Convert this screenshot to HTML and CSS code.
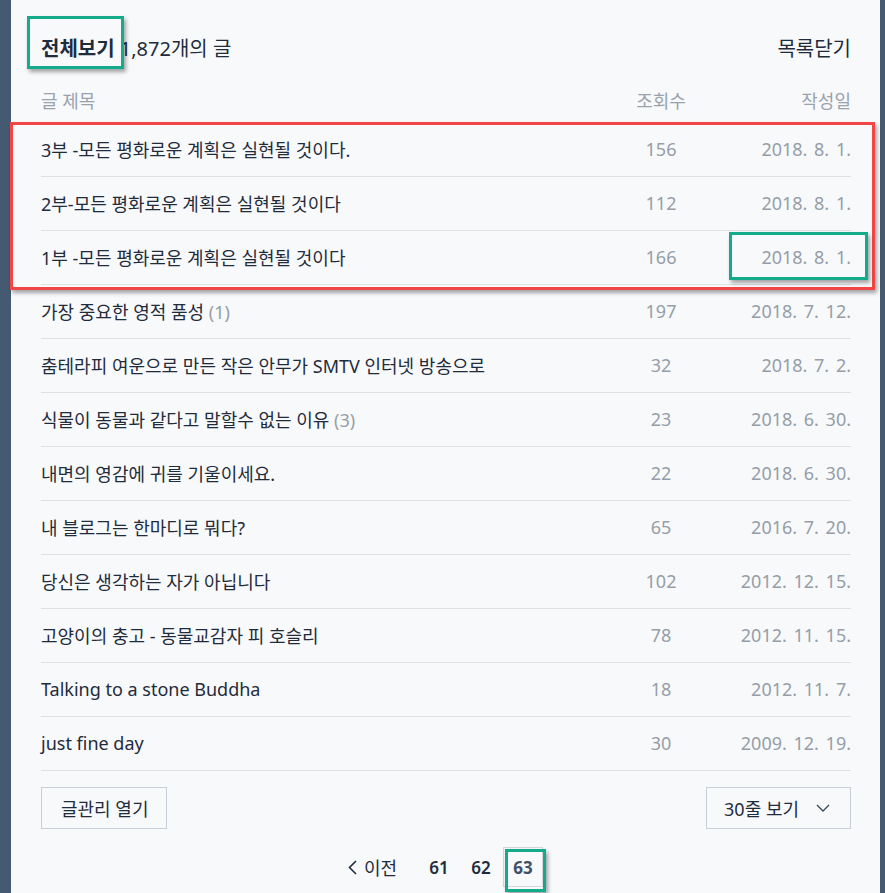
FILE: index.html
```html
<!DOCTYPE html>
<html lang="ko">
<head>
  <meta charset="UTF-8">
  <meta name="viewport" content="width=device-width, initial-scale=1.0">
  <title>전체보기 - 글 목록</title>
  <link rel="stylesheet" href="styles.css">
</head>
<body>
  <div class="panel">
    <!-- 상단 제목 -->
    <div class="list-head">
      <div class="list-title"><strong>전체보기</strong> 1,872개의 글</div>
      <a class="list-close" href="#">목록닫기</a>
    </div>

    <!-- 글 목록 표 -->
    <div class="col-head">
      <span class="col-title">글 제목</span>
      <span class="col-views">조회수</span>
      <span class="col-date">작성일</span>
    </div>

    <ul class="post-list">
      <li class="post"><span class="col-title">3부 -모든 평화로운 계획은 실현될 것이다.</span><span class="col-views">156</span><span class="col-date">2018. 8. 1.</span></li>
      <li class="post"><span class="col-title">2부-모든 평화로운 계획은 실현될 것이다</span><span class="col-views">112</span><span class="col-date">2018. 8. 1.</span></li>
      <li class="post"><span class="col-title">1부 -모든 평화로운 계획은 실현될 것이다</span><span class="col-views">166</span><span class="col-date">2018. 8. 1.</span></li>
      <li class="post"><span class="col-title">가장 중요한 영적 품성 <em>(1)</em></span><span class="col-views">197</span><span class="col-date">2018. 7. 12.</span></li>
      <li class="post"><span class="col-title">춤테라피 여운으로 만든 작은 안무가 SMTV 인터넷 방송으로</span><span class="col-views">32</span><span class="col-date">2018. 7. 2.</span></li>
      <li class="post"><span class="col-title">식물이 동물과 같다고 말할수 없는 이유 <em>(3)</em></span><span class="col-views">23</span><span class="col-date">2018. 6. 30.</span></li>
      <li class="post"><span class="col-title">내면의 영감에 귀를 기울이세요.</span><span class="col-views">22</span><span class="col-date">2018. 6. 30.</span></li>
      <li class="post"><span class="col-title">내 블로그는 한마디로 뭐다?</span><span class="col-views">65</span><span class="col-date">2016. 7. 20.</span></li>
      <li class="post"><span class="col-title">당신은 생각하는 자가 아닙니다</span><span class="col-views">102</span><span class="col-date">2012. 12. 15.</span></li>
      <li class="post"><span class="col-title">고양이의 충고 - 동물교감자 피 호슬리</span><span class="col-views">78</span><span class="col-date">2012. 11. 15.</span></li>
      <li class="post"><span class="col-title">Talking to a stone Buddha</span><span class="col-views">18</span><span class="col-date">2012. 11. 7.</span></li>
      <li class="post"><span class="col-title">just fine day</span><span class="col-views">30</span><span class="col-date">2009. 12. 19.</span></li>
    </ul>

    <!-- 하단 버튼 -->
    <div class="list-foot">
      <button class="btn">글관리 열기</button>
      <button class="btn btn-select">30줄 보기
        <svg width="14" height="8" viewBox="0 0 14 8"><path d="M1 1l6 6 6-6" fill="none" stroke="#3b4a5c" stroke-width="1.4"/></svg>
      </button>
    </div>

    <!-- 페이지 이동 -->
    <div class="paging">
      <a class="prev" href="#">
        <svg width="9" height="15" viewBox="0 0 9 15"><path d="M8 1L1.5 7.5 8 14" fill="none" stroke="#1f2c3c" stroke-width="1.6"/></svg>
        이전
      </a>
      <a class="page" href="#">61</a>
      <a class="page" href="#">62</a>
      <strong class="page current">63</strong>
    </div>

    <!-- 표시 상자 -->
    <div class="mark mark-green mark-title"></div>
    <div class="mark mark-red mark-rows"></div>
    <div class="mark mark-green mark-date"></div>
    <div class="mark mark-green mark-page"></div>
  </div>
</body>
</html>
```

FILE: styles.css
```css
/* 기본 */
* {
  box-sizing: border-box;
}

body {
  margin: 0;
  background: #455a70;
  font-family: "Noto Sans", "Noto Sans CJK KR", sans-serif;
  color: #1f2c3c;
}

a {
  color: inherit;
  text-decoration: none;
}

/* 흰 판 */
.panel {
  position: relative;
  margin-left: 11px;
  width: 869px;
  height: 893px;
  background: #f8f9fb;
  padding: 30px 29px 0 30px;
}

/* 상단 제목 */
.list-head {
  display: flex;
  justify-content: space-between;
  align-items: center;
  height: 34px;
  margin-bottom: 14px;
  font-size: 20px;
}

.list-title strong {
  font-weight: 700;
}

/* 표 머리 */
.col-head {
  display: flex;
  align-items: center;
  height: 45px;
  padding-bottom: 1px;
  font-size: 18px;
  color: #9aa3ad;
}

.col-title {
  flex: 1;
}

.col-views {
  width: 80px;
  text-align: center;
}

.col-date {
  width: 150px;
  text-align: right;
}

/* 글 목록 */
.post-list {
  list-style: none;
  margin: 0;
  padding: 0;
}

.post {
  display: flex;
  align-items: center;
  height: 54px;
  padding-bottom: 2px;
  border-bottom: 1px solid #dde0e4;
  font-size: 18px;
}

.post .col-views,
.post .col-date,
.post em {
  color: #959ea8;
  font-style: normal;
}

.post .col-date {
  word-spacing: 2px;
}

/* 하단 버튼 */
.list-foot {
  display: flex;
  justify-content: space-between;
  margin-top: 16px;
}

.btn {
  height: 42px;
  padding: 0 18px 0 19px;
  background: #f8f9fb;
  border: 1px solid #c8cfd7;
  font-family: inherit;
  font-size: 18px;
  color: #1f2c3c;
}

.btn-select {
  display: flex;
  align-items: center;
  gap: 17px;
  padding: 0 20px 0 17px;
}

/* 페이지 이동 */
.paging {
  display: flex;
  justify-content: center;
  align-items: center;
  margin-top: 18px;
  font-size: 17px;
}

.prev {
  display: flex;
  align-items: center;
  gap: 7px;
  margin-right: 21px;
  font-size: 18px;
}

.page {
  width: 40px;
  height: 40px;
  margin: 0 1px;
  display: flex;
  justify-content: center;
  align-items: center;
  font-weight: 600;
}

.current {
  border: 1px solid #d4d8dd;
  color: #3d5168;
  font-weight: 700;
}

/* 표시 상자 */
.mark {
  position: absolute;
  border: 3px solid;
  box-shadow: 2px 3px 4px rgba(0, 0, 0, 0.35);
}

.mark-green {
  border-color: #14ab8b;
}

.mark-red {
  border-color: #f24646;
}

.mark-title {
  left: 16px;
  top: 16px;
  width: 97px;
  height: 53px;
}

.mark-rows {
  left: -1px;
  top: 122px;
  width: 865px;
  height: 168px;
}

.mark-date {
  left: 718px;
  top: 232px;
  width: 139px;
  height: 48px;
}

.mark-page {
  left: 494px;
  top: 849px;
  width: 41px;
  height: 43px;
}
```
